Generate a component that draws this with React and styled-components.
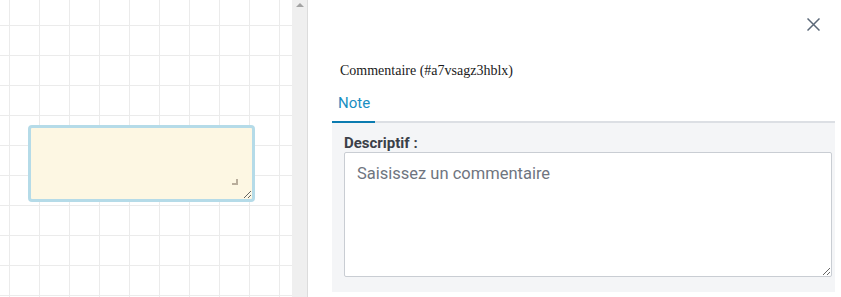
import React from "react";
import styled, { createGlobalStyle } from "styled-components";

const Global = createGlobalStyle`
  html, body { margin: 0; padding: 0; background: #fff; overflow: hidden; }
  #root { width: 841px; height: 297px; }
  * { box-sizing: border-box; }
`;

const Layout = styled.div`
  display: flex;
  width: 841px;
  height: 297px;
`;

const Canvas = styled.div`
  position: relative;
  width: 292px;
  height: 297px;
  background-color: #fff;
  background-image:
    linear-gradient(to right, #ebebeb 1px, transparent 1px),
    linear-gradient(to bottom, #ebebeb 1px, transparent 1px);
  background-size: 30px 30px;
  background-position: 9px 25px;
`;

const NoteBox = styled.textarea`
  position: absolute;
  left: 28px;
  top: 125px;
  width: 227px;
  height: 77px;
  margin: 0;
  border: 3px solid #b5dbe8;
  border-radius: 4px;
  background: #fdf7e3;
  resize: both;
  outline: none;
`;

const CornerMark = styled.span`
  position: absolute;
  left: 232px;
  top: 179px;
  width: 6px;
  height: 6px;
  border-right: 2px solid #b9ae9c;
  border-bottom: 2px solid #b9ae9c;
  pointer-events: none;
`;

const Scrollbar = styled.div`
  width: 16px;
  height: 297px;
  background: #efefef;
  border-right: 1px solid #dcdcdc;
  display: flex;
  justify-content: center;
  padding-top: 3px;
`;

const ArrowUp = styled.div`
  width: 0;
  height: 0;
  border-left: 4px solid transparent;
  border-right: 4px solid transparent;
  border-bottom: 4px solid #a3a3a3;
`;

const Panel = styled.div`
  flex: 1;
  display: flex;
  flex-direction: column;
  padding: 0 6px 5px 24px;
  background: #fff;
`;

const TopBar = styled.div`
  display: flex;
  justify-content: flex-end;
  padding-top: 18px;
  padding-right: 15px;
  height: 40px;
`;

const CloseBtn = styled.button`
  width: 13px;
  height: 13px;
  padding: 0;
  border: none;
  background: none;
  cursor: pointer;
  display: flex;
`;

const Title = styled.div`
  font-family: "Liberation Serif", "Times New Roman", serif;
  font-size: 14px;
  color: #1a1a1a;
  padding-left: 8px;
  margin-top: 23px;
  line-height: 16px;
`;

const Tabs = styled.div`
  display: flex;
  border-bottom: 2px solid #dcdfe4;
  margin-top: 14px;
`;

const Tab = styled.div`
  font-family: Roboto, "Liberation Sans", sans-serif;
  font-size: 15px;
  color: ${(p) => (p.$active ? "#1a8ec2" : "#555")};
  padding: 1px 5px 9px 6px;
  line-height: 18px;
  margin-bottom: -2px;
  border-bottom: 2px solid ${(p) => (p.$active ? "#0b7bb0" : "transparent")};
`;

const Content = styled.div`
  flex: 1;
  background: #f4f5f7;
  padding: 12px 3px 15px 12px;
  display: flex;
  flex-direction: column;
`;

const Label = styled.label`
  font-family: Roboto, "Liberation Sans", sans-serif;
  font-weight: 700;
  font-size: 15px;
  color: #3b4048;
  line-height: 16px;
  margin-bottom: 1px;
`;

const TextArea = styled.textarea`
  flex: 1;
  width: 100%;
  margin: 0;
  border: 1px solid #c9cdd3;
  border-radius: 2px;
  background: #fff;
  padding: 11px 12px;
  font-family: Roboto, "Liberation Sans", sans-serif;
  font-size: 16.5px;
  color: #333;
  outline: none;
  resize: vertical;
  &::placeholder { color: #6f7580; }
`;

export default function App() {
  return (
    <>
      <Global />
      <Layout>
        <Canvas>
          <NoteBox aria-label="note" />
          <CornerMark />
        </Canvas>
        <Scrollbar>
          <ArrowUp />
        </Scrollbar>
        <Panel>
          <TopBar>
            <CloseBtn aria-label="Fermer">
              <svg width="13" height="13" viewBox="0 0 13 13">
                <path d="M0.5 0.5 L12.5 12.5 M12.5 0.5 L0.5 12.5" stroke="#5b6878" strokeWidth="1.5" fill="none" />
              </svg>
            </CloseBtn>
          </TopBar>
          <Title>Commentaire (#a7vsagz3hblx)</Title>
          <Tabs>
            <Tab $active>Note</Tab>
          </Tabs>
          <Content>
            <Label>Descriptif :</Label>
            <TextArea placeholder="Saisissez un commentaire" />
          </Content>
        </Panel>
      </Layout>
    </>
  );
}
